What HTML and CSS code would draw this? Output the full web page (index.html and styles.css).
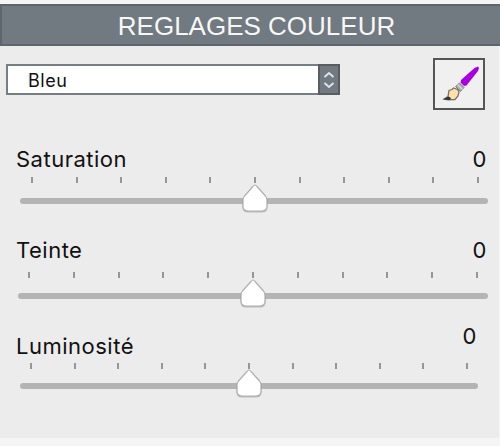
FILE: index.html
```html
<!DOCTYPE html>
<html lang="fr">
<head>
  <meta charset="UTF-8">
  <title>Réglages couleur</title>
  <meta name="viewport" content="width=device-width, initial-scale=1">
  <link rel="stylesheet" href="styles.css">
</head>
<body>

<div class="panel">
  <h1 class="panel-header"><span>REGLAGES COULEUR</span></h1>

  <!-- Couleur + pinceau -->
  <div class="toolbar">
    <div class="select">
      <span class="select-value">Bleu</span>
      <span class="select-arrows">
        <svg width="18" height="27" viewBox="0 0 18 27">
          <path d="M4.500 11 L9 7 L13.500 11 M4.500 17 L9 21 L13.500 17" fill="none" stroke="#dfe2e5" stroke-width="2"/>
        </svg>
      </span>
    </div>
    <button type="button" class="brush" aria-label="Pinceau">
      <svg width="48" height="48" viewBox="0 0 48 48">
        <path d="M43 6.500 L44 8 L43 11 L31.500 25.500 L29 26 L25.500 22.500 L26 20 L39.500 8 Z" fill="#a800dc"/>
        <path d="M24.500 23 L29 27.500 L25.500 31.500 L20.500 26.500 Z" fill="#aaa" stroke="#808080" stroke-width="1"/>
        <path d="M22.500 24.500 L27.500 29.500" stroke="#ddd" stroke-width="1.2"/>
        <path d="M9 39 L13 36.500 L14 30.500 L17 29.500 L18.500 28 L22.500 29.500 L24 32 L23 36 L20 39.500 L13 39.800 Z" fill="#ffdfae" stroke="#77726a" stroke-width="1.3"/>
        <path d="M8 39.500 L13.500 36.500 L16 38 L15 40 Z" fill="#333"/>
      </svg>
    </button>
  </div>

  <!-- Saturation -->
  <div class="setting saturation">
    <div class="setting-head">
      <span class="setting-label">Saturation</span>
      <span class="setting-value">0</span>
    </div>
    <div class="slider">
      <div class="ticks"><i></i><i></i><i></i><i></i><i></i><i></i><i></i><i></i><i></i><i></i><i></i></div>
      <div class="track">
        <svg class="thumb" width="28" height="32" viewBox="0 0 28 32">
          <path d="M14 2 Q14.800 2 16 3.500 L24.500 13 Q26 15 26 17 V23 Q26 28 21 28 H7 Q2 28 2 23 V17 Q2 15 3.500 13 L12 3.500 Q13.200 2 14 2 Z"/>
        </svg>
      </div>
    </div>
  </div>

  <!-- Teinte -->
  <div class="setting teinte">
    <div class="setting-head">
      <span class="setting-label">Teinte</span>
      <span class="setting-value">0</span>
    </div>
    <div class="slider">
      <div class="ticks"><i></i><i></i><i></i><i></i><i></i><i></i><i></i><i></i><i></i><i></i><i></i></div>
      <div class="track">
        <svg class="thumb" width="28" height="32" viewBox="0 0 28 32">
          <path d="M14 2 Q14.800 2 16 3.500 L24.500 13 Q26 15 26 17 V23 Q26 28 21 28 H7 Q2 28 2 23 V17 Q2 15 3.500 13 L12 3.500 Q13.200 2 14 2 Z"/>
        </svg>
      </div>
    </div>
  </div>

  <!-- Luminosité -->
  <div class="setting luminosite">
    <div class="setting-head">
      <span class="setting-label">Luminosité</span>
      <span class="setting-value">0</span>
    </div>
    <div class="slider">
      <div class="ticks"><i></i><i></i><i></i><i></i><i></i><i></i><i></i><i></i><i></i><i></i><i></i></div>
      <div class="track">
        <svg class="thumb" width="28" height="32" viewBox="0 0 28 32">
          <path d="M14 2 Q14.800 2 16 3.500 L24.500 13 Q26 15 26 17 V23 Q26 28 21 28 H7 Q2 28 2 23 V17 Q2 15 3.500 13 L12 3.500 Q13.200 2 14 2 Z"/>
        </svg>
      </div>
    </div>
  </div>
</div>

</body>
</html>
```
FILE: styles.css
```css
* {
  box-sizing: border-box;
}

body {
  margin: 0;
  padding-top: 4px;
  background-color: #f5f5f5;
  font-family: Inter, "Liberation Sans", sans-serif;
  color: #111;
}

.panel {
  width: 499px;
  height: 434px;
  background-color: #ececec;
}

.panel-header {
  width: 500px;
  height: 42px;
  margin: 0;
  padding-left: 11px;
  background-color: #717981;
  border: 2px solid #5d666f;
  border-right: none;
  color: #f7f7f7;
  font-family: "Liberation Sans", Arial, sans-serif;
  font-size: 26px;
  font-weight: normal;
  line-height: 41px;
  text-align: center;
  white-space: nowrap;
}

.toolbar {
  display: flex;
  justify-content: space-between;
  align-items: flex-start;
  padding: 12px 14px 0 6px;
}

.select {
  display: flex;
  width: 334px;
  height: 31px;
  margin-top: 6px;
  background-color: #fff;
  border: 2px solid #757d85;
  font-size: 18px;
  letter-spacing: 0.5px;
  line-height: 29px;
}

.select-value {
  flex: 1;
  padding-left: 20px;
}

.select-arrows {
  width: 22px;
  height: 31px;
  margin: -2px -2px 0 0;
  background-color: #717981;
  border: 2px solid #5a5c60;
}

.select-arrows svg {
  display: block;
}

.brush {
  width: 52px;
  height: 52px;
  padding: 0;
  background: #f0f0f0;
  border: 2px solid #555;
}

.brush svg {
  display: block;
}

.setting-head {
  display: flex;
  justify-content: space-between;
  padding: 0 12px 0 16px;
  font-size: 22px;
  letter-spacing: 0.5px;
  line-height: 24px;
}

.slider {
  padding: 6px 11px 0 20px;
}

.ticks {
  display: flex;
  justify-content: space-between;
  padding: 0 10px;
  margin-bottom: 15px;
}

.ticks i {
  width: 2px;
  height: 6px;
  background-color: #969696;
}

.track {
  position: relative;
  height: 6px;
  border-radius: 3px;
  background-color: #b4b4b4;
}

/* poignée posée sur la piste */
.thumb {
  position: absolute;
  left: 50%;
  top: -15px;
  margin-left: -13px;
  overflow: visible;
}

.thumb path {
  fill: #fff;
  stroke: #b0b0b0;
  stroke-width: 1.2;
  filter: drop-shadow(0 1px 0.5px rgba(0, 0, 0, 0.2));
}

.saturation {
  margin-top: 37px;
}

.saturation .ticks {
  padding: 0 9px 0 11px;
}

.teinte {
  margin-top: 34px;
}

.teinte .slider {
  padding: 10px 11px 0 18px;
}

.teinte .thumb,
.luminosite .thumb {
  margin-left: -14px;
}

.luminosite {
  margin-top: 25px;
}

.luminosite .setting-head {
  height: 34px;
  padding-right: 22px;
}

.luminosite .setting-label {
  align-self: flex-end;
}

.luminosite .slider {
  padding: 5px 21px 0 20px;
}

.luminosite .ticks {
  margin-bottom: 14px;
}
```
